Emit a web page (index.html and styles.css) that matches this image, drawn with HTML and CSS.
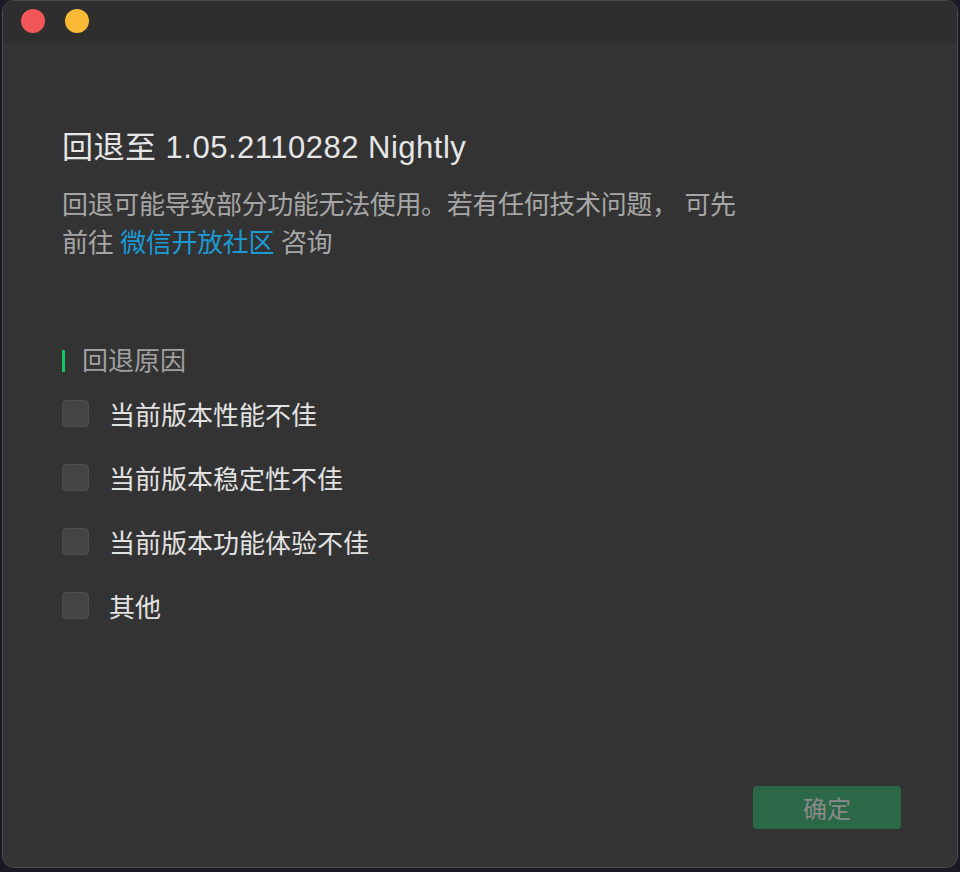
FILE: index.html
```html
<!DOCTYPE html>
<html lang="zh-CN">
<head>
<meta charset="utf-8">
<title>回退</title>
<link rel="stylesheet" href="styles.css">
</head>
<body>
<div class="window">
  <div class="titlebar">
    <span class="light red"></span>
    <span class="light yellow"></span>
  </div>
  <div class="content">
    <h1 class="title">回退至 1.05.2110282 Nightly</h1>
    <p class="desc">回退可能导致部分功能无法使用。若有任何技术问题， 可先<br>前往 <a class="link">微信开放社区</a> 咨询</p>
    <div class="section">
      <span class="bar"></span>
      <span class="section-title">回退原因</span>
    </div>
    <ul class="options">
      <li class="option"><span class="box"></span><span class="label">当前版本性能不佳</span></li>
      <li class="option"><span class="box"></span><span class="label">当前版本稳定性不佳</span></li>
      <li class="option"><span class="box"></span><span class="label">当前版本功能体验不佳</span></li>
      <li class="option"><span class="box"></span><span class="label">其他</span></li>
    </ul>
  </div>
  <div class="footer">
    <button class="confirm">确定</button>
  </div>
</div>
</body>
</html>
```

FILE: styles.css
```css
* { box-sizing: border-box; }
html, body {
  margin: 0;
  padding: 0;
  background: #1a1a26;
  font-family: "Liberation Sans", "Noto Sans CJK SC", sans-serif;
}
body {
  width: 960px;
  height: 872px;
  overflow: hidden;
}
.window {
  margin-left: 2px;
  width: 956px;
  height: 868px;
  border-radius: 12px;
  background: #333333;
  border: 1px solid #4a4a4a;
  display: flex;
  flex-direction: column;
  overflow: hidden;
}
.titlebar {
  height: 42px;
  flex: none;
  background: #2e2e2e;
  display: flex;
  align-items: center;
  gap: 20px;
  padding-left: 18px;
  padding-bottom: 2px;
}
.light {
  width: 24px;
  height: 24px;
  border-radius: 50%;
  display: block;
}
.red { background: #f25656; }
.yellow { background: #fbb935; }
.content {
  padding-left: 59px;
  flex: 1;
}
.title {
  margin: 87px 0 0;
  font-size: 31px;
  line-height: 36px;
  letter-spacing: 0.5px;
  font-weight: 400;
  color: #e6e6e6;
}
.desc {
  margin: 20px 0 0;
  font-size: 26px;
  line-height: 38px;
  letter-spacing: -0.35px;
  color: #a6a6a6;
}
.link {
  color: #1b9ad6;
}
.section {
  margin-top: 84px;
  display: flex;
  align-items: center;
  height: 30px;
}
.bar {
  width: 3px;
  height: 22px;
  background: #12c765;
  border-radius: 1px;
}
.section-title {
  margin-left: 17px;
  font-size: 26px;
  line-height: 30px;
  color: #a0a0a0;
}
.options {
  list-style: none;
  margin: 17px 0 0;
  padding: 0;
  display: flex;
  flex-direction: column;
  gap: 24px;
}
.option {
  display: flex;
  align-items: center;
  height: 40px;
}
.box {
  width: 27px;
  height: 27px;
  border-radius: 4px;
  background: #444444;
  border: 1px solid #4e4e4e;
}
.label {
  margin-left: 20px;
  font-size: 26px;
  color: #e2e2e2;
}
.footer {
  display: flex;
  justify-content: flex-end;
  padding: 0 56px 38px 0;
}
.confirm {
  width: 148px;
  height: 43px;
  border: none;
  border-radius: 4px;
  background: #2a6847;
  color: #8a8a8a;
  font-family: "Liberation Sans", "Noto Sans CJK SC", sans-serif;
  font-size: 24px;
  padding: 0;
}
```
